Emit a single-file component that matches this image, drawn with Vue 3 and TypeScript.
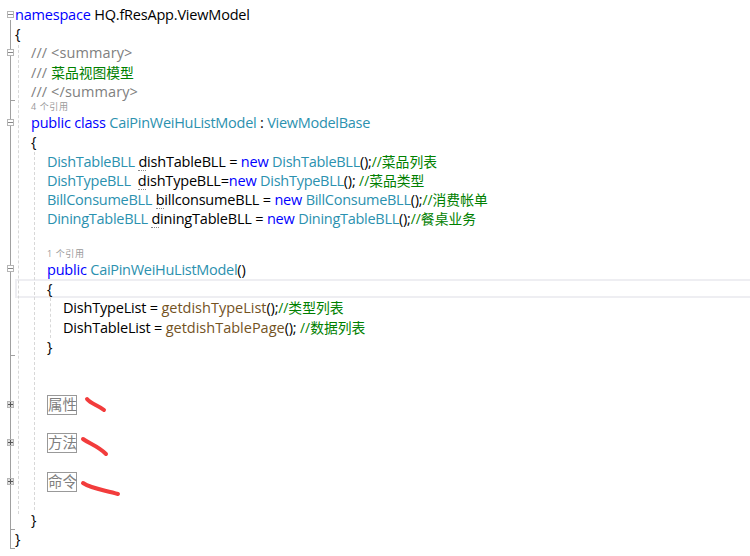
<script setup lang="ts">
type Tok = { t: string; c?: string; dots?: boolean };
type Line = { kind?: 'code' | 'lens' | 'current' | 'region'; indent: number; toks: Tok[] };

const k = (t: string): Tok => ({ t, c: 'kw' });
const ty = (t: string): Tok => ({ t, c: 'type' });
const g = (t: string): Tok => ({ t, c: 'gray' });
const cm = (t: string): Tok => ({ t, c: 'cm' });
const m = (t: string): Tok => ({ t, c: 'method' });
const p = (t: string): Tok => ({ t });
const d = (t: string): Tok => ({ t, dots: true });
const blank: Line = { indent: 0, toks: [] };

const lines: Line[] = [
  { indent: 0, toks: [k('namespace'), p(' HQ.fResApp.ViewModel')] },
  { indent: 0, toks: [p('{')] },
  { indent: 1, toks: [g('/// <summary>')] },
  { indent: 1, toks: [g('/// '), cm('菜品视图模型')] },
  { indent: 1, toks: [g('/// </summary>')] },
  { kind: 'lens', indent: 1, toks: [p('4 个引用')] },
  { indent: 1, toks: [k('public class'), p(' '), ty('CaiPinWeiHuListModel'), p(' : '), ty('ViewModelBase')] },
  { indent: 1, toks: [p('{')] },
  { indent: 2, toks: [ty('DishTableBLL'), p(' '), d('dishTableBLL'), p(' = '), k('new'), p(' '), ty('DishTableBLL'), p('();'), cm('//菜品列表')] },
  { indent: 2, toks: [ty('DishTypeBLL'), p('  '), d('dishTypeBLL'), p('='), k('new'), p(' '), ty('DishTypeBLL'), p('(); '), cm('//菜品类型')] },
  { indent: 2, toks: [ty('BillConsumeBLL'), p(' '), d('billconsumeBLL'), p(' = '), k('new'), p(' '), ty('BillConsumeBLL'), p('();'), cm('//消费帐单')] },
  { indent: 2, toks: [ty('DiningTableBLL'), p(' '), d('diningTableBLL'), p(' = '), k('new'), p(' '), ty('DiningTableBLL'), p('();'), cm('//餐桌业务')] },
  blank,
  { kind: 'lens', indent: 2, toks: [p('1 个引用')] },
  { indent: 2, toks: [k('public'), p(' '), ty('CaiPinWeiHuListModel'), p('()')] },
  { kind: 'current', indent: 2, toks: [p('{')] },
  { indent: 3, toks: [p('DishTypeList = '), m('getdishTypeList'), p('();'), cm('//类型列表')] },
  { indent: 3, toks: [p('DishTableList = '), m('getdishTablePage'), p('(); '), cm('//数据列表')] },
  { indent: 2, toks: [p('}')] },
  blank,
  blank,
  { kind: 'region', indent: 2, toks: [p('属性')] },
  blank,
  { kind: 'region', indent: 2, toks: [p('方法')] },
  blank,
  { kind: 'region', indent: 2, toks: [p('命令')] },
  blank,
  { indent: 1, toks: [p('}')] },
  { indent: 0, toks: [p('}')] },
];

const folds = [
  { y: 15, plus: false },
  { y: 53, plus: false },
  { y: 123, plus: false },
  { y: 269, plus: false },
  { y: 405, plus: true },
  { y: 443, plus: true },
  { y: 482, plus: true },
];
const ticks = [100, 355, 529, 548];
const guides = [
  { x: 18, top: 45, h: 469 },
  { x: 34, top: 152, h: 358 },
  { x: 50, top: 298, h: 40 },
];
const strokes = [
  'M87 399 C91 404 98 405 104 410',
  'M83 439 C90 444 98 446 106 454',
  'M83 483 C92 489 105 490 118 494',
];
</script>

<template>
  <div class="editor">
    <div class="code">
      <div
        v-for="(line, i) in lines"
        :key="i"
        class="line"
        :class="[line.kind, 'ind' + line.indent]"
      >
        <span v-if="line.kind === 'region'" class="collapsed">{{ line.toks[0].t }}</span>
        <template v-else>
          <span
            v-for="(tok, j) in line.toks"
            :key="j"
            :class="[tok.c, { dots: tok.dots }]"
          >{{ tok.t }}</span>
        </template>
      </div>
    </div>

    <div class="outline"></div>
    <div v-for="y in ticks" :key="y" class="tick" :style="{ top: y + 'px' }"></div>
    <div
      v-for="f in folds"
      :key="f.y"
      class="fold"
      :class="{ plus: f.plus }"
      :style="{ top: f.y - 3 + 'px' }"
    ></div>
    <div
      v-for="gd in guides"
      :key="gd.x"
      class="guide"
      :style="{ left: gd.x + 'px', top: gd.top + 'px', height: gd.h + 'px' }"
    ></div>

    <svg class="marks" width="750" height="556" viewBox="0 0 750 556">
      <path v-for="s in strokes" :key="s" :d="s" />
    </svg>
  </div>
</template>

<style scoped>
.editor {
  position: relative;
  width: 750px;
  height: 556px;
  overflow: hidden;
  background: #fff;
  font-family: "Open Sans", "Noto Sans CJK SC", sans-serif;
  font-size: 14.5px;
  letter-spacing: -0.2px;
  color: #000;
}
.code {
  display: flex;
  flex-direction: column;
  padding-top: 4.9px;
}
.line {
  height: 19.25px;
  line-height: 19.25px;
  white-space: pre;
  box-sizing: border-box;
}
.ind0 { padding-left: 15px; }
.ind1 { padding-left: 31px; }
.ind2 { padding-left: 47px; }
.ind3 { padding-left: 63px; }
.lens {
  height: 12px;
  line-height: 11px;
  font-size: 9px;
  letter-spacing: 0.6px;
  color: #999;
}
.current {
  margin-left: 15px;
  padding-left: 30px;
  line-height: 16px;
  border: 2px solid #eeeef2;
  border-right: 0;
}
.kw { color: #0000ff; }
.type { color: #2b91af; letter-spacing: -0.28px; }
.gray { color: #808080; letter-spacing: 0.1px; }
.cm { color: #008000; font-size: 13.8px; letter-spacing: 0; }
.method { color: #74531f; letter-spacing: 0; }
.dots { position: relative; }
.dots::after {
  content: "";
  position: absolute;
  left: 0;
  bottom: 0;
  width: 8px;
  border-bottom: 1px dotted #888;
}
.collapsed {
  display: inline-block;
  box-sizing: border-box;
  width: 30px;
  height: 20px;
  line-height: 18px;
  text-align: center;
  border: 1px solid #999;
  color: #808080;
  letter-spacing: 0;
}
.outline {
  position: absolute;
  left: 10px;
  top: 20px;
  width: 1px;
  height: 528px;
  background: #a0a0a0;
}
.tick {
  position: absolute;
  left: 10px;
  width: 5px;
  height: 1px;
  background: #a0a0a0;
}
.fold {
  position: absolute;
  left: 8px;
  width: 5px;
  height: 5px;
  background: #fff linear-gradient(#888, #888) center / 5px 1px no-repeat;
  outline: 1px solid #b5b5b5;
}
.fold.plus {
  background:
    linear-gradient(#555, #555) center / 5px 1px no-repeat,
    linear-gradient(#555, #555) center / 1px 5px no-repeat,
    #e0e0e0;
}
.guide {
  position: absolute;
  width: 0;
  border-left: 1px dashed #d8d8d8;
}
.marks {
  position: absolute;
  left: 0;
  top: 0;
  pointer-events: none;
}
.marks path {
  fill: none;
  stroke: #f23c3c;
  stroke-width: 4;
  stroke-linecap: round;
}
</style>
